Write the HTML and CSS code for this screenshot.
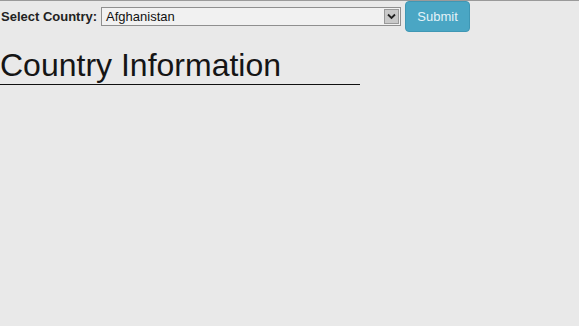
FILE: index.html
```html
<!DOCTYPE html>
<html lang="en">
<head>
<meta charset="utf-8">
<title>Country Information</title>
<link rel="stylesheet" href="styles.css">
</head>
<body>
<form class="toolbar">
  <label class="label" for="country">Select Country:</label>
  <div class="select">
    <span class="select-value">Afghanistan</span>
    <span class="select-arrow">
      <svg width="9" height="7" viewBox="0 0 9 7"><path d="M1 1.5 L4.5 5 L8 1.5" fill="none" stroke="#222" stroke-width="1.8"/></svg>
    </span>
  </div>
  <button type="button" class="submit">Submit</button>
</form>
<h1 class="title">Country Information</h1>
</body>
</html>
```
FILE: styles.css
```css
html, body {
  margin: 0;
  padding: 0;
  background: #e9e9e9;
  font-family: "Liberation Sans", Arial, sans-serif;
}
body {
  border-top: 1px solid #9a9a9a;
  height: 325px;
}
.toolbar {
  display: flex;
  align-items: center;
  height: 31px;
  padding-left: 1px;
}
.label {
  font-size: 13px;
  font-weight: bold;
  color: #222;
  margin-right: 4px;
}
.select {
  width: 298px;
  height: 17px;
  border: 1px solid #8f8f8f;
  background: #f1f1f1;
  display: flex;
  align-items: center;
  justify-content: space-between;
}
.select-value {
  font-size: 13px;
  color: #111;
  padding-left: 4px;
}
.select-arrow {
  width: 15px;
  height: 15px;
  margin-right: 1px;
  background: #c9c9c9;
  border: 1px solid #999;
  box-sizing: border-box;
  display: flex;
  align-items: center;
  justify-content: center;
}
.submit {
  margin-left: 4px;
  width: 65px;
  height: 31px;
  border: 1px solid #3f97b4;
  border-radius: 4px;
  background: #4aa6c4;
  color: #e4f3f8;
  font-family: "Liberation Sans", Arial, sans-serif;
  font-size: 13px;
  padding: 0;
}
.title {
  margin: 15px 0 0 0;
  width: 360px;
  font-size: 32px;
  font-weight: normal;
  color: #151515;
  line-height: 37px;
  border-bottom: 1px solid #111;
  padding-left: 0;
}
```
